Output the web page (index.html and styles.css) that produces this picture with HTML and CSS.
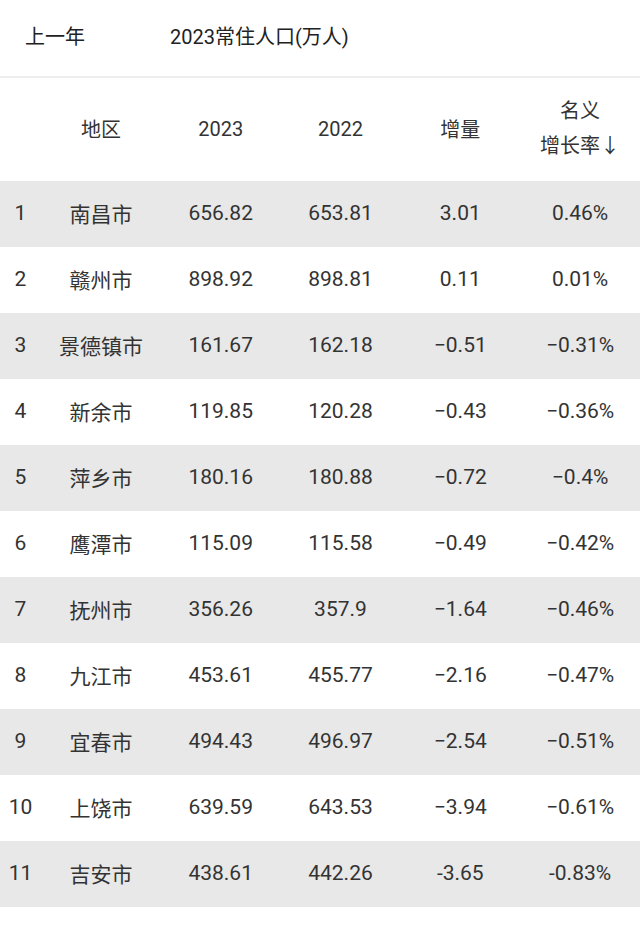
FILE: index.html
```html
<!DOCTYPE html>
<html lang="zh">
<head>
<meta charset="utf-8">
<link rel="stylesheet" href="styles.css">
</head>
<body>
<div class="topbar">
  <span class="back">上一年</span>
  <span class="title">2023常住人口(万人)</span>
</div>
<div class="table">
  <div class="row head">
    <div></div><div>地区</div><div>2023</div><div>2022</div><div>增量</div><div class="two">名义<br>增长率↓</div>
  </div>
  <div class="row g"><div>1</div><div>南昌市</div><div>656.82</div><div>653.81</div><div>3.01</div><div>0.46%</div></div>
  <div class="row"><div>2</div><div>赣州市</div><div>898.92</div><div>898.81</div><div>0.11</div><div>0.01%</div></div>
  <div class="row g"><div>3</div><div>景德镇市</div><div>161.67</div><div>162.18</div><div>−0.51</div><div>−0.31%</div></div>
  <div class="row"><div>4</div><div>新余市</div><div>119.85</div><div>120.28</div><div>−0.43</div><div>−0.36%</div></div>
  <div class="row g"><div>5</div><div>萍乡市</div><div>180.16</div><div>180.88</div><div>−0.72</div><div>−0.4%</div></div>
  <div class="row"><div>6</div><div>鹰潭市</div><div>115.09</div><div>115.58</div><div>−0.49</div><div>−0.42%</div></div>
  <div class="row g"><div>7</div><div>抚州市</div><div>356.26</div><div>357.9</div><div>−1.64</div><div>−0.46%</div></div>
  <div class="row"><div>8</div><div>九江市</div><div>453.61</div><div>455.77</div><div>−2.16</div><div>−0.47%</div></div>
  <div class="row g"><div>9</div><div>宜春市</div><div>494.43</div><div>496.97</div><div>−2.54</div><div>−0.51%</div></div>
  <div class="row"><div>10</div><div>上饶市</div><div>639.59</div><div>643.53</div><div>−3.94</div><div>−0.61%</div></div>
  <div class="row g"><div>11</div><div>吉安市</div><div>438.61</div><div>442.26</div><div>-3.65</div><div>-0.83%</div></div>
</div>
</body>
</html>
```
FILE: styles.css
```css
html, body {
  margin: 0;
  padding: 0;
  background: #fff;
}
body {
  font-family: "Roboto", "Noto Sans CJK SC", sans-serif;
  color: #333;
  width: 640px;
}
.topbar {
  height: 76px;
  display: flex;
  align-items: center;
  font-size: 20px;
  color: #222;
  border-bottom: 2px solid #eee;
  padding-left: 25px;
}
.topbar .back {
  width: 145px;
  margin-top: -6px;
}
.topbar .title {
  margin-top: -6px;
}
.row {
  display: grid;
  grid-template-columns: 41px repeat(5, 1fr);
  height: 66px;
  align-items: center;
  text-align: center;
  font-size: 21px;
  color: #333;
}
.row > div {
  margin-top: -2px;
}
.row.g {
  background: #e8e8e8;
}
.row.head {
  height: 103px;
  font-size: 20px;
}
.row.head .two {
  line-height: 35px;
}
```
